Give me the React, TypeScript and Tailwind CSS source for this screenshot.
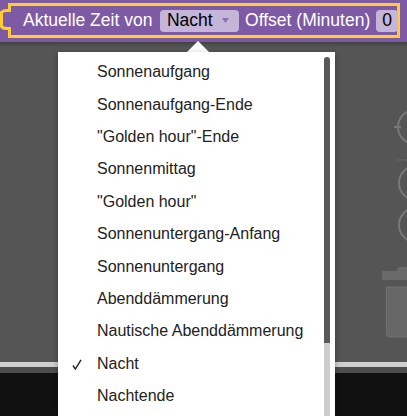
import React from 'react';

const items = [
    'Sonnenaufgang',
    'Sonnenaufgang-Ende',
    '"Golden hour"-Ende',
    'Sonnenmittag',
    '"Golden hour"',
    'Sonnenuntergang-Anfang',
    'Sonnenuntergang',
    'Abenddämmerung',
    'Nautische Abenddämmerung',
    'Nacht',
    'Nachtende',
];

const selected = 'Nacht';

const WorkspaceControls: React.FC = () => (
    <svg className="absolute left-0 top-0" width="407" height="416" viewBox="0 0 407 416" fill="none">
        {/* reset / zoom circles, cut off at the right edge */}
        <circle cx="415" cy="127" r="17" stroke="#787878" strokeWidth="2" />
        <line x1="394" y1="127" x2="401" y2="127" stroke="#787878" strokeWidth="2" />
        <line x1="397" y1="160" x2="407" y2="160" stroke="#6a6a6a" strokeWidth="1" />
        <circle cx="416" cy="183" r="17" stroke="#787878" strokeWidth="2" />
        <circle cx="416" cy="225" r="17" stroke="#787878" strokeWidth="2" />
        {/* trash can */}
        <path d="M382 271 h14 l3 -4 h10 v13 h-27 z" fill="#6a6a6a" />
        <path d="M386.5 287 h22 v50 h-19 a3 3 0 0 1 -3 -3 z" fill="#666" stroke="#707070" strokeWidth="1" />
    </svg>
);

const DropdownMenu: React.FC = () => (
    <>
        <div className="absolute left-[187px] top-[41px] h-0 w-0 border-l-[11px] border-r-[11px] border-b-[11px] border-l-transparent border-r-transparent border-b-white" />
        <div className="absolute left-[58px] top-[52px] bottom-0 w-[277px] bg-white pt-[4px] shadow-[0_2px_6px_rgba(0,0,0,0.35)]">
            {items.map((item) => (
                <div key={item} className="relative flex h-[32.4px] items-center whitespace-nowrap pl-[39px] text-[16px] text-[#222]">
                    {item === selected && (
                        <svg className="absolute left-[14px] top-[11px]" width="10" height="11" viewBox="0 0 10 11">
                            <path d="M1 6.5 L3.3 10 L9 0.8" stroke="#222" strokeWidth="1.4" fill="none" />
                        </svg>
                    )}
                    {item}
                </div>
            ))}
            <div className="absolute left-[266px] top-[5px] bottom-0 flex w-[6px] flex-col">
                <div className="h-[286px] rounded-t-[3px] bg-[#595959]" />
                <div className="flex-1 bg-[#cdcdcd]" />
            </div>
        </div>
    </>
);

export default function App() {
    return (
        <div className="relative flex h-[416px] w-[407px] flex-col overflow-hidden bg-[#555] font-['Liberation_Sans',Arial,sans-serif]">
            <div className="relative h-[42px] shrink-0 bg-[#7e5aa5] pl-[8px] pr-[7px] pt-[3px]">
                <svg className="absolute left-0 top-[9px]" width="12" height="21" viewBox="0 0 12 21">
                    <path d="M11 1.5 H7 C5 1.5 3 1.5 1.5 3.5 V17.5 C3 19.5 5 19.5 7 19.5 H11" stroke="#fc3" strokeWidth="3" fill="#7e5aa5" />
                </svg>
                <div className="flex h-[35px] items-center whitespace-nowrap border-[3px] border-[#fc3] pl-[12px] text-[17.5px] text-white">
                    <span className="shrink-0">Aktuelle Zeit von</span>
                    <div className="ml-[7.5px] flex h-[22px] shrink-0 items-center rounded-[4px] bg-[#c5b5d9] pl-[7px] pr-[10px] text-black">
                        <span>Nacht</span>
                        <svg className="ml-[9px]" width="7" height="5" viewBox="0 0 7 5">
                            <path d="M0 0 H7 L3.5 5 Z" fill="#8a6fb0" />
                        </svg>
                    </div>
                    <span className="ml-[6.5px] shrink-0">Offset (Minuten)</span>
                    <div className="ml-[6px] flex h-[22px] w-[22px] shrink-0 items-center justify-center rounded-[4px] bg-[#c5b5d9] text-black">
                        0
                    </div>
                </div>
            </div>
            <div className="h-[5px] shrink-0 bg-gradient-to-b from-[#424242] to-[#555]" />
            <div className="flex-1" />
            <div className="h-[5px] shrink-0 bg-[#cfcfcf]" />
            <div className="h-[6px] shrink-0 bg-[#4d4d4d]" />
            <div className="h-[43px] shrink-0 bg-[#111]" />
            <WorkspaceControls />
            <DropdownMenu />
        </div>
    );
}
